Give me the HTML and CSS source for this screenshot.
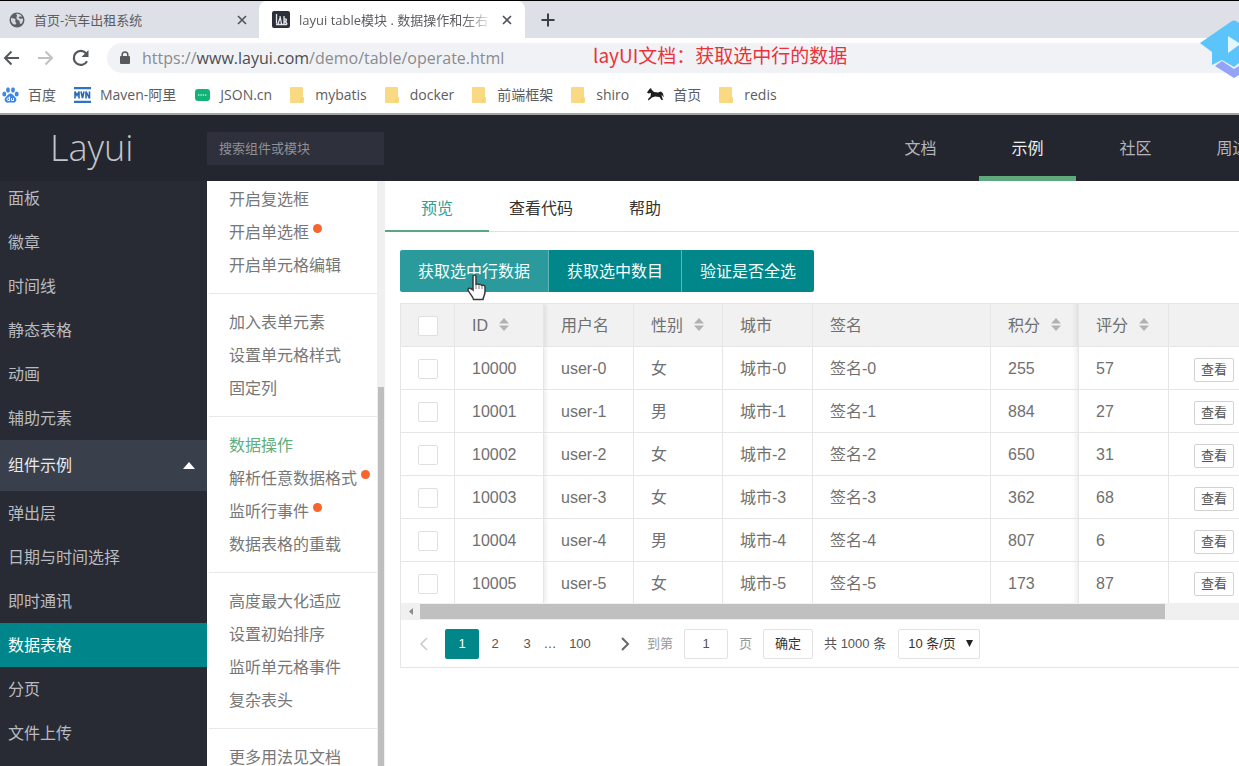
FILE: index.html
```html
<!DOCTYPE html>
<html lang="zh-CN">
<head>
<meta charset="utf-8">
<title>layui table模块 . 数据操作和左右</title>
<link rel="stylesheet" href="styles.css">
</head>
<body>
<div class="chrome">
  <div class="tabstrip">
    <div class="btab">
      <svg class="fav" width="16" height="16" viewBox="0 0 16 16"><circle cx="8" cy="8" r="7.5" fill="#5b5f66"/><path d="M2 6c2 1 2.500-.5 4 1s-.5 2 .5 3 1.500 3-1 2.500S1.500 9 2 6zM7 2c2-.8 5 .5 6 2.500-1.500.5-1.500-.5-3 .5s1 2 3 1.500 1 4-1 5.500c-1.500 0-1-2.500-2-3.500s-2.500-.5-2.500-2.500S9 4 7 2z" fill="#d3d6dc"/></svg>
      <span class="btab-title">首页-汽车出租系统</span>
      <button class="x" aria-label="关闭"><svg width="10" height="10" viewBox="0 0 10 10"><path d="M1 1l8 8M9 1l-8 8" stroke="#53565c" stroke-width="1.700"/></svg></button>
    </div>
    <div class="btab btab-on">
      <svg class="fav" width="18" height="17" viewBox="0 0 18 17"><rect width="18" height="17" rx="2" fill="#2b303b"/><path d="M4.500 3v9.500M8 7l-2 6M8 5l1.500 8M12 5v8M12 8c3.500-1 3 2.500 0 2.500 2.500 0 2.500 1 3 3M4 13.500h11" fill="none" stroke="#e4e6ea" stroke-width="1.300"/></svg>
      <span class="btab-title fade">layui table模块 . 数据操作和左右</span>
      <button class="x" aria-label="关闭"><svg width="10" height="10" viewBox="0 0 10 10"><path d="M1 1l8 8M9 1l-8 8" stroke="#53565c" stroke-width="1.700"/></svg></button>
    </div>
    <button class="newtab" aria-label="新标签页"><svg width="14" height="14" viewBox="0 0 14 14"><path d="M7 .5v13M.5 7h13" stroke="#3c4046" stroke-width="2"/></svg></button>
  </div>
  <div class="address">
    <button class="navb" aria-label="后退"><svg width="16" height="16" viewBox="0 0 16 16"><path d="M16 8H2M8.500 1.500L2 8l6.500 6.500" fill="none" stroke="#54575c" stroke-width="2"/></svg></button>
    <button class="navb" aria-label="前进"><svg width="16" height="16" viewBox="0 0 16 16"><path d="M0 8h14M7.500 1.500L14 8l-6.500 6.500" fill="none" stroke="#bfc1c5" stroke-width="2"/></svg></button>
    <button class="navb" aria-label="刷新"><svg width="18" height="18" viewBox="0 0 18 18"><path d="M15 12.200A7 7 0 1 1 14 4.200" fill="none" stroke="#54575c" stroke-width="2.200"/><path d="M16.500 1v7h-7z" fill="#54575c"/></svg></button>
    <div class="omni">
      <svg width="10" height="14" viewBox="0 0 10 14"><rect y="5" width="10" height="8" rx="1" fill="#55585d"/><path d="M2.200 6V3.800a2.800 2.800 0 0 1 5.600 0V6" fill="none" stroke="#55585d" stroke-width="1.500"/></svg>
      <span class="url">https://<b>www.layui.com</b>/demo/table/operate.html</span>
    </div>
    <p class="note">layUI文档：获取选中行的数据</p>
  </div>
  <nav class="marks">
    <a href="#"><svg width="17" height="16" viewBox="0 0 17 16"><g fill="#3c86e8"><ellipse cx="2.300" cy="7" rx="2" ry="2.500"/><ellipse cx="6" cy="3" rx="1.900" ry="2.700"/><ellipse cx="11" cy="3" rx="1.900" ry="2.700"/><ellipse cx="14.700" cy="7" rx="2" ry="2.500"/><path d="M8.500 6.500c2 0 3 2 4.500 3.500s2 3 .5 4.800c-1.500 1.500-3 .7-5 .7s-3.500.8-5-.7C2 13 2.500 11.500 4 10s2.500-3.500 4.500-3.500z"/></g><path d="M7.500 9.500v4H6a1.300 1.300 0 0 1 0-2.500h1.500M9.500 11v2.500h2V11" fill="none" stroke="#fff"/></svg><span>百度</span></a>
    <a href="#"><svg width="17" height="16" viewBox="0 0 17 16"><path d="M0 1.200h17M0 14.800h17" stroke="#2f74c4" stroke-width="2.200"/><path d="M1 11.500v-7l2 4 2-4v7M7 4.500l1.500 6.500L10 4.500M12 11.500v-7l3.500 7v-7" fill="none" stroke="#2767b3" stroke-width="1.600"/></svg><span>Maven-阿里</span></a>
    <a href="#"><svg width="17" height="12" viewBox="0 0 17 12"><rect x="1" width="15" height="12" rx="3" fill="#12b377"/><path d="M4 6h9" stroke="#7edcb8" stroke-width="2" stroke-dasharray="1.500 .8"/></svg><span>JSON.cn</span></a>
    <a href="#" class="folder"><svg width="14" height="16" viewBox="0 0 14 16"><path d="M1 0h11a1 1 0 0 1 1 1v9l1 1v4a1 1 0 0 1-1 1H1a1 1 0 0 1-1-1V1a1 1 0 0 1 1-1z" fill="#f9da83"/><path d="M13 10.500l-2 2V15" fill="none" stroke="#efca6c"/></svg><span>mybatis</span></a>
    <a href="#" class="folder"><svg width="14" height="16" viewBox="0 0 14 16"><path d="M1 0h11a1 1 0 0 1 1 1v9l1 1v4a1 1 0 0 1-1 1H1a1 1 0 0 1-1-1V1a1 1 0 0 1 1-1z" fill="#f9da83"/><path d="M13 10.500l-2 2V15" fill="none" stroke="#efca6c"/></svg><span>docker</span></a>
    <a href="#" class="folder"><svg width="14" height="16" viewBox="0 0 14 16"><path d="M1 0h11a1 1 0 0 1 1 1v9l1 1v4a1 1 0 0 1-1 1H1a1 1 0 0 1-1-1V1a1 1 0 0 1 1-1z" fill="#f9da83"/><path d="M13 10.500l-2 2V15" fill="none" stroke="#efca6c"/></svg><span>前端框架</span></a>
    <a href="#" class="folder"><svg width="14" height="16" viewBox="0 0 14 16"><path d="M1 0h11a1 1 0 0 1 1 1v9l1 1v4a1 1 0 0 1-1 1H1a1 1 0 0 1-1-1V1a1 1 0 0 1 1-1z" fill="#f9da83"/><path d="M13 10.500l-2 2V15" fill="none" stroke="#efca6c"/></svg><span>shiro</span></a>
    <a href="#"><svg width="17" height="14" viewBox="0 0 17 14"><path d="M0 4.500L2.500 1 4 0l.5 1.500L7 4l4 .5 3-1 2 2 .8 4-1.500-2-.8-1 .5 2.500 1 3h-1.500L12.500 9 8 8.500l-3 1-3.500 3L1 11l2.500-2.500L4 5 1.500 5.500z" fill="#1e1e1e"/></svg><span>首页</span></a>
    <a href="#" class="folder"><svg width="14" height="16" viewBox="0 0 14 16"><path d="M1 0h11a1 1 0 0 1 1 1v9l1 1v4a1 1 0 0 1-1 1H1a1 1 0 0 1-1-1V1a1 1 0 0 1 1-1z" fill="#f9da83"/><path d="M13 10.500l-2 2V15" fill="none" stroke="#efca6c"/></svg><span>redis</span></a>
  </nav>
  <svg class="badge" width="39" height="58" viewBox="0 0 39 58"><path d="M15 46l7-5 12 8 5-3v9l-5 3z" fill="#93a3fa"/><path d="M0 23L32 1q2-1 4 0l3 2v40l-5 4-12-7-10 5V32z" fill="#5bc5fb"/><path d="M28 16l11 7v2l-11 8z" fill="#e4f6fd"/></svg>
</div>

<header class="top">
  <a class="logo" href="#">Layui</a>
  <input class="search" type="text" placeholder="搜索组件或模块" aria-label="搜索组件或模块">
  <nav class="topnav">
    <a href="#">文档</a><a href="#" class="on">示例</a><a href="#">社区</a><a href="#">周边</a>
  </nav>
</header>

<div class="page">
  <nav class="side">
    <a href="#">面板</a><a href="#">徽章</a><a href="#">时间线</a><a href="#">静态表格</a><a href="#">动画</a><a href="#">辅助元素</a>
    <button class="group">组件示例<svg width="12" height="7" viewBox="0 0 12 7"><path d="M0 7l6-7 6 7z" fill="#fff"/></svg></button>
    <a href="#">弹出层</a><a href="#">日期与时间选择</a><a href="#">即时通讯</a><a href="#" class="on">数据表格</a><a href="#">分页</a><a href="#">文件上传</a>
  </nav>

  <div class="sub">
    <nav class="sublist">
      <div class="sec"><a href="#">开启复选框</a><a href="#" class="dot">开启单选框</a><a href="#">开启单元格编辑</a></div>
      <div class="sec"><a href="#">加入表单元素</a><a href="#">设置单元格样式</a><a href="#">固定列</a></div>
      <div class="sec"><a href="#" class="on">数据操作</a><a href="#" class="dot">解析任意数据格式</a><a href="#" class="dot">监听行事件</a><a href="#">数据表格的重载</a></div>
      <div class="sec"><a href="#">高度最大化适应</a><a href="#">设置初始排序</a><a href="#">监听单元格事件</a><a href="#">复杂表头</a></div>
      <div class="sec"><a href="#">更多用法见文档</a></div>
    </nav>
    <div class="vbar"><div class="vthumb"></div></div>
  </div>

  <main class="main">
    <div class="tabs" role="tablist">
      <button role="tab" class="on">预览</button><button role="tab">查看代码</button><button role="tab">帮助</button>
    </div>
    <div class="content">
      <div class="btns">
        <button class="hover">获取选中行数据<svg class="hand" width="20" height="27" viewBox="0 0 20 27"><path d="M6 2.500C6 .5 9 .5 9 2.500V11c0-1.500 3-1.500 3 .3 0-1.300 3-1.300 3 .7 0-1.200 3-1 3 1v5c0 3-1.500 4-2 7.500H6.500C6 22.500 3 20 1.500 17S2.500 13 6 16z" fill="#fff" stroke="#37393f" stroke-width="1.500"/><path d="M9 11v4M12 11.500V15M15 12v3" stroke="#77797e"/></svg></button><button>获取选中数目</button><button>验证是否全选</button>
      </div>
      <div class="grid">
        <table>
          <colgroup><col class="c55"><col class="c89"><col class="c90"><col class="c89"><col class="c90"><col class="c178"><col class="c88"><col class="c90"><col></colgroup>
          <thead><tr>
            <th><input type="checkbox" aria-label="全选"></th>
            <th class="fixl">ID<svg class="sort" width="10" height="13" viewBox="0 0 10 13"><path d="M0 5.500L5 0l5 5.500zM0 7.500L5 13l5-5.500z"/></svg></th>
            <th>用户名</th>
            <th>性别<svg class="sort" width="10" height="13" viewBox="0 0 10 13"><path d="M0 5.500L5 0l5 5.500zM0 7.500L5 13l5-5.500z"/></svg></th>
            <th>城市</th><th>签名</th>
            <th class="fixr">积分<svg class="sort" width="10" height="13" viewBox="0 0 10 13"><path d="M0 5.500L5 0l5 5.500zM0 7.500L5 13l5-5.500z"/></svg></th>
            <th>评分<svg class="sort" width="10" height="13" viewBox="0 0 10 13"><path d="M0 5.500L5 0l5 5.500zM0 7.500L5 13l5-5.500z"/></svg></th>
            <th></th>
          </tr></thead>
          <tbody>
            <tr><td><input type="checkbox" aria-label="10000"></td><td class="fixl">10000</td><td>user-0</td><td>女</td><td>城市-0</td><td>签名-0</td><td class="fixr">255</td><td>57</td><td class="ops"><button>查看</button></td></tr>
            <tr><td><input type="checkbox" aria-label="10001"></td><td class="fixl">10001</td><td>user-1</td><td>男</td><td>城市-1</td><td>签名-1</td><td class="fixr">884</td><td>27</td><td class="ops"><button>查看</button></td></tr>
            <tr><td><input type="checkbox" aria-label="10002"></td><td class="fixl">10002</td><td>user-2</td><td>女</td><td>城市-2</td><td>签名-2</td><td class="fixr">650</td><td>31</td><td class="ops"><button>查看</button></td></tr>
            <tr><td><input type="checkbox" aria-label="10003"></td><td class="fixl">10003</td><td>user-3</td><td>女</td><td>城市-3</td><td>签名-3</td><td class="fixr">362</td><td>68</td><td class="ops"><button>查看</button></td></tr>
            <tr><td><input type="checkbox" aria-label="10004"></td><td class="fixl">10004</td><td>user-4</td><td>男</td><td>城市-4</td><td>签名-4</td><td class="fixr">807</td><td>6</td><td class="ops"><button>查看</button></td></tr>
            <tr><td><input type="checkbox" aria-label="10005"></td><td class="fixl">10005</td><td>user-5</td><td>女</td><td>城市-5</td><td>签名-5</td><td class="fixr">173</td><td>87</td><td class="ops"><button>查看</button></td></tr>
          </tbody>
        </table>
        <div class="hbar"><svg width="19" height="15" viewBox="0 0 19 15"><path d="M12 4v7L8 7.500z" fill="#8b8b8b"/></svg><div class="htrack"><div class="hthumb"></div></div></div>
        <div class="pager">
          <button class="arrow" aria-label="上一页"><svg width="9" height="14" viewBox="0 0 9 14"><path d="M8 1L2 7l6 6" fill="none" stroke="#c9c9c9" stroke-width="1.500"/></svg></button>
          <button class="pg cur">1</button><button class="pg">2</button><button class="pg">3</button><span class="dots">…</span><button class="pg wide">100</button>
          <button class="arrow" aria-label="下一页"><svg width="9" height="14" viewBox="0 0 9 14"><path d="M1 1l6 6-6 6" fill="none" stroke="#666" stroke-width="2"/></svg></button>
          <label class="jump">到第<input type="text" value="1">页</label>
          <button class="go">确定</button>
          <span class="total">共 1000 条</span>
          <div class="size"><select aria-label="每页条数"><option>10 条/页</option></select><svg width="7" height="7" viewBox="0 0 8 8"><path d="M0 0h8L4 8z" fill="#222"/></svg></div>
        </div>
      </div>
    </div>
  </main>
</div>
</body>
</html>
```
FILE: styles.css
```css
* { box-sizing: border-box; }
body { margin: 0; height: 100vh; display: flex; flex-direction: column; overflow: hidden; background: #fff; font: 16px/20px "Liberation Sans", "Noto Sans CJK SC", sans-serif; color: #707070; }
a { color: inherit; text-decoration: none; }
button, input, select { font: inherit; color: inherit; margin: 0; padding: 0; border: 0; background: none; border-radius: 0; white-space: nowrap; }
svg { flex: none; display: block; }

/* browser window */
.chrome { position: relative; flex: none; border-top: 1px solid #000; border-bottom: 2px solid #a3a4a8; font-family: "Open Sans", "Noto Sans CJK SC", sans-serif; font-size: 14px; color: #5c5d61; }
.tabstrip { display: flex; height: 37px; background: #dde0e7; }
.btab { display: flex; align-items: center; gap: 9px; width: 259px; padding: 0 12px 0 9px; }
.btab-on { width: 266px; padding: 0 13px; background: #fff; border-radius: 8px 8px 0 0; }
.btab-title { flex: 1; min-width: 0; overflow: hidden; white-space: nowrap; font-size: 13px; }
.fade { -webkit-mask-image: linear-gradient(90deg, #000 85%, transparent); mask-image: linear-gradient(90deg, #000 85%, transparent); }
.newtab { width: 46px; display: grid; place-items: center; }
.address { position: relative; display: flex; align-items: center; height: 39px; padding-left: 2px; gap: 18px; }
.navb { width: 17px; display: grid; place-items: center; }
.omni { flex: 1; display: flex; align-items: center; gap: 12px; height: 30px; padding-left: 13px; border-radius: 15px 0 0 15px; background: #f1f2f5; }
.url { font-size: 16px; color: #8a8b8f; }
.url b { font-weight: 400; color: #4c4d51; }
.note { position: absolute; left: 593px; top: 3px; margin: 0; line-height: 28px; font-family: "Noto Sans CJK SC", sans-serif; font-size: 19px; color: #e93239; white-space: nowrap; }
.marks { display: flex; align-items: center; gap: 18px; height: 36px; padding-left: 2px; white-space: nowrap; }
.marks a { display: flex; align-items: center; gap: 9px; }
.marks .folder { gap: 11px; }
.badge { position: absolute; right: 0; top: 19px; }

/* site header */
.top { flex: none; z-index: 1; display: flex; align-items: center; height: 66px; background: #23262f; overflow: hidden; }
.logo { width: 207px; padding-left: 50px; font: 300 36px/40px "Open Sans", sans-serif; color: #c3c4c8; }
.search { width: 177px; height: 33px; padding: 0 12px; background: #2e313b; font-size: 13px; }
.search::placeholder { color: #8e9097; opacity: 1; }
.topnav { display: flex; margin-left: auto; margin-right: -42px; height: 66px; color: #b4b5ba; }
.topnav a { width: 97px; line-height: 68px; text-align: center; }
.topnav .on { margin: 0 11px 0 10px; color: #eee; border-bottom: 5px solid #60a97d; }

/* columns */
.page { flex: 1; min-height: 0; display: flex; overflow: hidden; }
.side { flex: none; width: 207px; margin-top: -5px; background: #282b34; color: #b9babf; }
.side a { display: block; padding: 2px 0 0 8px; line-height: 42px; }
.side .on { background: #00868a; color: #fff; }
.group { display: flex; align-items: center; justify-content: space-between; width: 100%; height: 51px; padding: 0 12px 0 8px; background: #393f4b; color: #e9e9ec; }

.sub { flex: none; width: 178px; display: flex; overflow: hidden; }
.sublist { flex: 1; margin-top: -10px; padding-left: 2px; color: #777; }
.sec { padding: 12px 0 11px; border-bottom: 1px solid #e8e8e8; }
.sec a { display: flex; padding-left: 20px; line-height: 33px; white-space: nowrap; }
.sec .on { color: #61ae7c; }
.dot::after { content: ""; width: 9px; height: 9px; margin: 8px 0 0 4px; border-radius: 50%; background: #f7652e; }
.vbar { width: 8px; padding: 206px 1px 0; background: #f0f0f0; }
.vthumb { height: 100%; background: #bebebe; }

.main { flex: 1; min-width: 0; }
.tabs { display: flex; height: 51px; border-bottom: 1px solid #e0e0e0; color: #333; }
.tabs button { width: 104px; height: 51px; padding-top: 7px; border-bottom: 2px solid transparent; }
.tabs .on { color: #2f9e98; border-bottom-color: #58a780; }
.content { padding: 18px 0 0 15px; }
.btns { display: flex; }
.btns button { position: relative; height: 42px; padding: 2px 18px 0; background: #018689; color: #f4ffff; border-right: 1px solid #5fb5b6; }
.btns .hover { background: #2a9a9d; border-radius: 2px 0 0 2px; }
.btns button:last-child { border-right: 0; border-radius: 0 2px 2px 0; }
.hand { position: absolute; left: 67px; top: 24px; z-index: 1; }

/* data table */
.grid { margin-top: 11px; border: 1px solid #e6e6e6; border-right: 0; }
table { width: 100%; table-layout: fixed; border-collapse: separate; border-spacing: 0; }
.c55 { width: 54px; } .c88 { width: 88px; } .c89 { width: 89px; } .c90 { width: 90px; } .c178 { width: 178px; }
th, td { height: 43px; padding: 2px 0 0 17px; border-right: 1px solid #e6e6e6; border-bottom: 1px solid #e6e6e6; text-align: left; font-weight: 400; white-space: nowrap; }
th { background: #f1f1f1; }
th:last-child, td:last-child { border-right: 0; }
tbody tr:last-child td { height: 41px; border-bottom: 0; }
.sort { display: inline-block; margin-left: 11px; fill: #b2b2b2; }
.fixl, .fixr { position: relative; }
.fixl { box-shadow: 2px 0 4px rgba(0, 0, 0, .08); clip-path: inset(0 -6px 0 0); }
.fixr { box-shadow: inset -6px 0 5px -4px rgba(0, 0, 0, .08); }
th input, td input { display: block; appearance: none; width: 20px; height: 20px; border: 1px solid #dfdfdf; border-radius: 2px; background: #fff; }
.ops { padding-left: 25px; }
.ops button { display: block; width: 40px; height: 24px; margin-top: 1px; border: 1px solid #d2d2d2; border-radius: 2px; font-size: 13px; line-height: 20px; color: #555; }
.hbar { display: flex; align-items: center; height: 17px; background: #f0f0f0; }
.htrack { flex: 1; }
.hthumb { width: 91%; height: 15px; background: #c0c0c0; }

.pager { display: flex; align-items: center; height: 47px; font-size: 13px; color: #555; white-space: nowrap; }
.pager svg { margin: 0 auto; }
.arrow { width: 44px; }
.pg { width: 32px; height: 30px; }
.cur { width: 34px; border-radius: 2px; background: #018689; color: #fff; }
.dots { width: 14px; text-align: center; }
.wide { width: 46px; }
.jump { display: flex; align-items: center; gap: 11px; color: #999; }
.jump input, .go, .size select { height: 30px; border: 1px solid #e2e2e2; border-radius: 2px; }
.jump input { width: 44px; text-align: center; color: #555; }
.go { width: 50px; margin: 0 11px; color: #333; }
.total { margin-right: 12px; }
.size { position: relative; }
.size select { appearance: none; width: 82px; padding-left: 9px; color: #333; }
.size svg { position: absolute; right: 7px; top: 11px; pointer-events: none; }
```
